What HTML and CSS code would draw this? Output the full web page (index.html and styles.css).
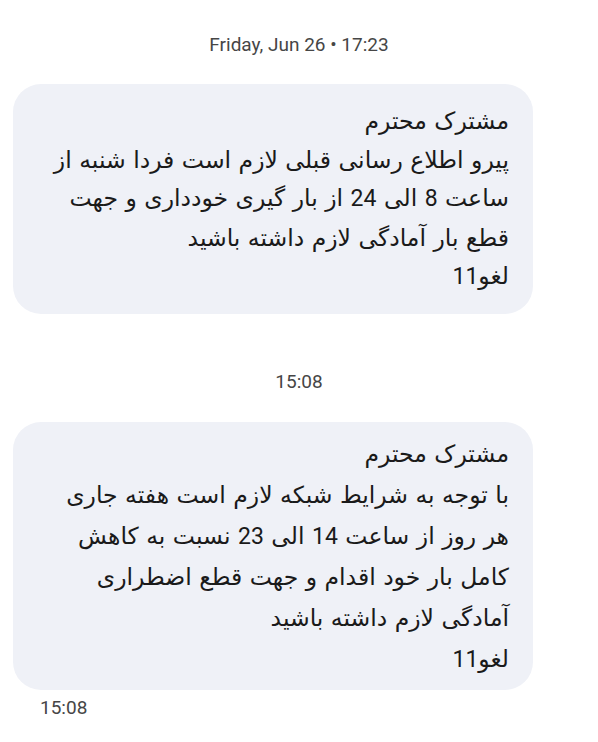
FILE: index.html
```html
<!DOCTYPE html>
<html lang="fa">
<head>
<meta charset="utf-8">
<link rel="stylesheet" href="styles.css">
</head>
<body>
<div class="thread">
  <div class="stamp stamp-top">Friday, Jun 26 • 17:23</div>
  <div class="bubble bubble-1" dir="rtl">
    <p>مشترک محترم<br>پیرو اطلاع رسانی قبلی لازم است فردا شنبه از<br>ساعت <span class="num">8</span> الی <span class="num">24</span> از بار گیری خودداری و جهت<br>قطع بار آمادگی لازم داشته باشید<br>لغو<span class="num">11</span></p>
  </div>
  <div class="stamp stamp-mid">15:08</div>
  <div class="bubble bubble-2" dir="rtl">
    <p>مشترک محترم<br>با توجه به شرایط شبکه لازم است هفته جاری<br>هر روز از ساعت <span class="num">14</span> الی <span class="num">23</span> نسبت به کاهش<br>کامل بار خود اقدام و جهت قطع اضطراری<br>آمادگی لازم داشته باشید<br>لغو<span class="num">11</span></p>
  </div>
  <div class="stamp stamp-left">15:08</div>
</div>
</body>
</html>
```
FILE: styles.css
```css
html, body {
  margin: 0;
  padding: 0;
  background: #ffffff;
}
.thread {
  width: 598px;
  display: flex;
  flex-direction: column;
}
.stamp {
  font-family: Roboto, "Noto Sans", sans-serif;
  font-size: 19px;
  color: #464646;
  line-height: 22px;
}
.stamp-top {
  text-align: center;
  padding-top: 34px;
  padding-bottom: 28px;
}
.stamp-mid {
  text-align: center;
  padding-top: 57px;
  padding-bottom: 29px;
}
.stamp-left {
  padding-left: 40px;
  padding-top: 7px;
}
.bubble {
  margin-left: 13px;
  width: 520px;
  box-sizing: border-box;
  background: #eff1f7;
  border-radius: 28px;
  padding: 18px 24px 17px 20px;
}
.bubble p {
  margin: 0;
  font-family: "DejaVu Sans", "Noto Sans", sans-serif;
  font-size: 23.5px;
  line-height: 38.5px;
  color: #1a1a1a;
  text-align: right;
  white-space: nowrap;
}
.bubble-2 {
  padding-top: 12px;
  padding-bottom: 10px;
}
.bubble-2 p {
  line-height: 41px;
}
.num {
  font-family: Roboto, sans-serif;
  font-size: 23px;
}
```
